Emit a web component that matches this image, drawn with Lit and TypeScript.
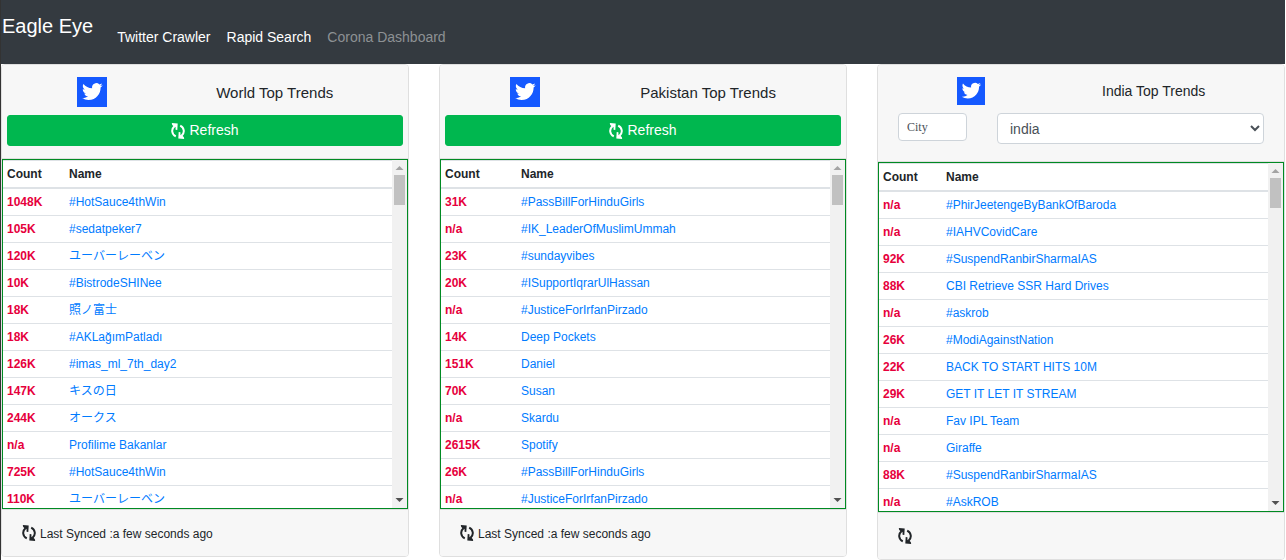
import { LitElement, html, css, svg } from "lit";
import { customElement, property } from "lit/decorators.js";
import { styleMap } from "lit/directives/style-map.js";

type Trend = [count: string, name: string];

const WORLD: Trend[] = [
  ["1048K", "#HotSauce4thWin"],
  ["105K", "#sedatpeker7"],
  ["120K", "ユーバーレーベン"],
  ["10K", "#BistrodeSHINee"],
  ["18K", "照ノ富士"],
  ["18K", "#AKLağımPatladı"],
  ["126K", "#imas_ml_7th_day2"],
  ["147K", "キスの日"],
  ["244K", "オークス"],
  ["n/a", "Profilime Bakanlar"],
  ["725K", "#HotSauce4thWin"],
  ["110K", "ユーバーレーベン"],
];

const PAKISTAN: Trend[] = [
  ["31K", "#PassBillForHinduGirls"],
  ["n/a", "#IK_LeaderOfMuslimUmmah"],
  ["23K", "#sundayvibes"],
  ["20K", "#ISupportIqrarUlHassan"],
  ["n/a", "#JusticeForIrfanPirzado"],
  ["14K", "Deep Pockets"],
  ["151K", "Daniel"],
  ["70K", "Susan"],
  ["n/a", "Skardu"],
  ["2615K", "Spotify"],
  ["26K", "#PassBillForHinduGirls"],
  ["n/a", "#JusticeForIrfanPirzado"],
];

const INDIA: Trend[] = [
  ["n/a", "#PhirJeetengeByBankOfBaroda"],
  ["n/a", "#IAHVCovidCare"],
  ["92K", "#SuspendRanbirSharmaIAS"],
  ["88K", "CBI Retrieve SSR Hard Drives"],
  ["n/a", "#askrob"],
  ["26K", "#ModiAgainstNation"],
  ["22K", "BACK TO START HITS 10M"],
  ["29K", "GET IT LET IT STREAM"],
  ["n/a", "Fav IPL Team"],
  ["n/a", "Giraffe"],
  ["88K", "#SuspendRanbirSharmaIAS"],
  ["n/a", "#AskROB"],
];

const bird = svg`<path fill="#fff" d="M23.95 4.57a10 10 0 0 1-2.82.77 4.96 4.96 0 0 0 2.16-2.72c-.95.55-2 .96-3.13 1.18a4.92 4.92 0 0 0-8.38 4.48C7.69 8.1 4.07 6.13 1.64 3.16a4.82 4.82 0 0 0-.67 2.48c0 1.71.87 3.21 2.19 4.1a4.9 4.9 0 0 1-2.23-.62v.06a4.92 4.92 0 0 0 3.95 4.83 5 5 0 0 1-2.21.09 4.94 4.94 0 0 0 4.6 3.42A9.87 9.87 0 0 1 0 19.54a13.99 13.99 0 0 0 7.56 2.21c9.05 0 14-7.5 14-13.98 0-.21 0-.42-.02-.63a9.94 9.94 0 0 0 2.46-2.55z"/>`;

const syncIcon = html`<svg class="sync" viewBox="0 0 14 16" aria-hidden="true">
  <g fill="none" stroke="currentColor" stroke-width="2">
    <path d="M4.800 13.400C.4 11.200 .1 6 3.600 3" />
    <path d="M9.200 2.600C13.600 4.800 13.900 10 10.400 13" />
  </g>
  <path fill="currentColor" d="M.8 .1L6.700 .5L6.300 7L4.600 6.700L4.500 3.900L3 3.600L1.200 2.100Z" />
  <path fill="currentColor" d="M13.200 15.900L7.300 15.500L7.700 9L9.400 9.300L9.500 12.100L11 12.400L12.800 13.900Z" />
</svg>`;

@customElement("trend-card")
export class TrendCard extends LitElement {
  @property() heading = "";
  @property({ type: Array }) trends: Trend[] = [];
  @property({ type: Number }) countWidth = 62;
  @property() synced = "";
  @property({ type: Boolean }) searchable = false;

  static styles = css`
    :host {
      display: block;
      min-width: 0;
    }
    .card {
      border: 1px solid #dfdfdf;
      border-radius: 4px;
      background: #fff;
      overflow: hidden;
    }
    .head {
      padding: 12px 5px;
      background: #f7f7f7;
      border-bottom: 1px solid #dfdfdf;
    }
    .title-row {
      display: flex;
      justify-content: space-around;
      align-items: center;
      padding: 0 15px;
      margin-bottom: 8px;
    }
    .logo {
      display: block;
      width: 30px;
      height: 30px;
      background: #1559ff;
    }
    .title {
      margin: 0;
      font-size: 15px;
      font-weight: 400;
      line-height: 24px;
      padding-top: 2px;
    }
    .searchable .logo {
      width: 28px;
      height: 28px;
    }
    .searchable .title {
      font-size: 14px;
      padding-top: 0;
    }
    .searchable .head {
      padding-bottom: 17px;
    }
    .refresh {
      display: flex;
      justify-content: center;
      align-items: center;
      gap: 4px;
      width: 100%;
      padding: 4px 8px;
      border: 1px solid #00b74f;
      border-radius: 3px;
      background: #00b74f;
      color: #fff;
      font: inherit;
      font-size: 14px;
      line-height: 21px;
    }
    .sync {
      display: block;
      width: 14px;
      height: 16px;
    }
    .filters {
      display: grid;
      grid-template-columns: 1fr 3fr;
      align-items: start;
    }
    .field {
      display: block;
      min-width: 0;
      padding: 0 15px;
    }
    .city,
    .country {
      display: block;
      box-sizing: border-box;
      width: 100%;
      border: 1px solid #ced4da;
      border-radius: 4px;
      background: #fff;
      color: #495057;
    }
    .city {
      height: 28px;
      padding: 4px 8px;
      font: 12px "Liberation Serif", serif;
    }
    .city::placeholder {
      color: #495057;
      opacity: 1;
    }
    .country {
      height: 31px;
      padding: 4px 8px;
      font: inherit;
      font-size: 14px;
    }
    .list {
      display: flex;
      height: 348px;
      border: 1px solid #008a22;
      overflow: hidden;
    }
    .table {
      flex: 1;
      min-width: 0;
      align-self: flex-start;
      table-layout: fixed;
      border-spacing: 0;
      font-size: 12px;
      line-height: 18px;
    }
    th,
    td {
      padding: 4px;
      text-align: left;
      height: 18px;
      white-space: nowrap;
    }
    th {
      border-top: 1px solid #dee2e6;
      border-bottom: 2px solid #dee2e6;
    }
    tr + tr td {
      border-top: 1px solid #dee2e6;
    }
    .count {
      color: #e6003c;
      font-weight: 700;
    }
    .link {
      color: #007bff;
      text-decoration: none;
      display: block;
      height: 18px;
    }
    .bar {
      display: flex;
      flex-direction: column;
      align-items: center;
      width: 15px;
      background: #f1f1f1;
    }
    .arrow {
      display: block;
      width: 15px;
      height: 15px;
    }
    .thumb {
      width: 11px;
      height: 30px;
      margin-bottom: auto;
      background: #c1c1c1;
    }
    .foot {
      display: flex;
      align-items: center;
      gap: 4px;
      padding: 12px 20px;
      border-top: 1px solid #dfdfdf;
      background: #f7f7f7;
      font-size: 12px;
      line-height: 22px;
      min-height: 22px;
    }
    .synced {
      padding-top: 2px;
      line-height: 20px;
    }
  `;

  private renderActions() {
    if (!this.searchable) {
      return html`<button class="refresh" type="button">${syncIcon}<span>Refresh</span></button>`;
    }
    return html`<div class="filters">
      <div class="field">
        <input class="city" type="text" placeholder="City" aria-label="City" />
      </div>
      <div class="field">
        <select class="country" aria-label="Country">
          <option>india</option>
        </select>
      </div>
    </div>`;
  }

  render() {
    return html`<section class="card ${this.searchable ? "searchable" : ""}">
      <header class="head">
        <div class="title-row">
          <svg class="logo" viewBox="-5.800 -4.900 34.800 34.800" aria-hidden="true">${bird}</svg>
          <h2 class="title">${this.heading}</h2>
        </div>
        ${this.renderActions()}
      </header>
      <div class="list">
        <table class="table">
          <colgroup>
            <col style=${styleMap({ width: `${this.countWidth}px` })} />
            <col />
          </colgroup>
          <thead>
            <tr><th scope="col">Count</th><th scope="col">Name</th></tr>
          </thead>
          <tbody>
            ${this.trends.map(
              ([count, name]) => html`<tr>
                <td class="count">${count}</td>
                <td><a class="link" href="#">${name}</a></td>
              </tr>`,
            )}
          </tbody>
        </table>
        <div class="bar" aria-hidden="true">
          <svg class="arrow" viewBox="0 0 15 15"><path fill="#a3a3a3" d="M3.500 10L7.500 6L11.500 10Z" /></svg>
          <div class="thumb"></div>
          <svg class="arrow" viewBox="0 0 15 15"><path fill="#505050" d="M3.500 5L7.500 9L11.500 5Z" /></svg>
        </div>
      </div>
      <footer class="foot">
        ${syncIcon}${this.synced ? html`<span class="synced">${this.synced}</span>` : null}
      </footer>
    </section>`;
  }
}

@customElement("app-root")
export class AppRoot extends LitElement {
  static styles = css`
    :host {
      display: block;
      box-sizing: border-box;
      min-height: 100vh;
      border-left: 1px solid #333;
      padding-right: 1px;
      background: #fff;
      color: #212529;
      font-family: "Liberation Sans", "Noto Sans CJK JP", sans-serif;
    }
    .nav {
      display: flex;
      align-items: flex-start;
      gap: 16px;
      padding: 11px 1px 10px;
      background: #343a40;
    }
    .brand {
      color: #fff;
      font-size: 20px;
      line-height: 30px;
      text-decoration: none;
      white-space: nowrap;
    }
    .menu {
      display: flex;
      margin: 0;
      padding: 9px 0 0;
      list-style: none;
    }
    .menu-link {
      display: block;
      padding: 6px 8px;
      color: #fff;
      font-size: 14px;
      line-height: 22px;
      text-decoration: none;
      white-space: nowrap;
    }
    .muted {
      color: #8d9194;
    }
    .board {
      display: grid;
      grid-template-columns: repeat(3, minmax(0, 1fr));
      align-items: start;
      gap: 30px;
    }
  `;

  render() {
    return html`<nav class="nav">
        <a class="brand" href="#">Eagle Eye</a>
        <ul class="menu">
          <li><a class="menu-link" href="#">Twitter Crawler</a></li>
          <li><a class="menu-link" href="#">Rapid Search</a></li>
          <li><a class="menu-link muted" href="#">Corona Dashboard</a></li>
        </ul>
      </nav>
      <main class="board">
        <trend-card heading="World Top Trends" .trends=${WORLD} .countWidth=${62} synced="Last Synced :a few seconds ago"></trend-card>
        <trend-card heading="Pakistan Top Trends" .trends=${PAKISTAN} .countWidth=${76} synced="Last Synced :a few seconds ago"></trend-card>
        <trend-card heading="India Top Trends" .trends=${INDIA} .countWidth=${63} searchable></trend-card>
      </main>`;
  }
}
